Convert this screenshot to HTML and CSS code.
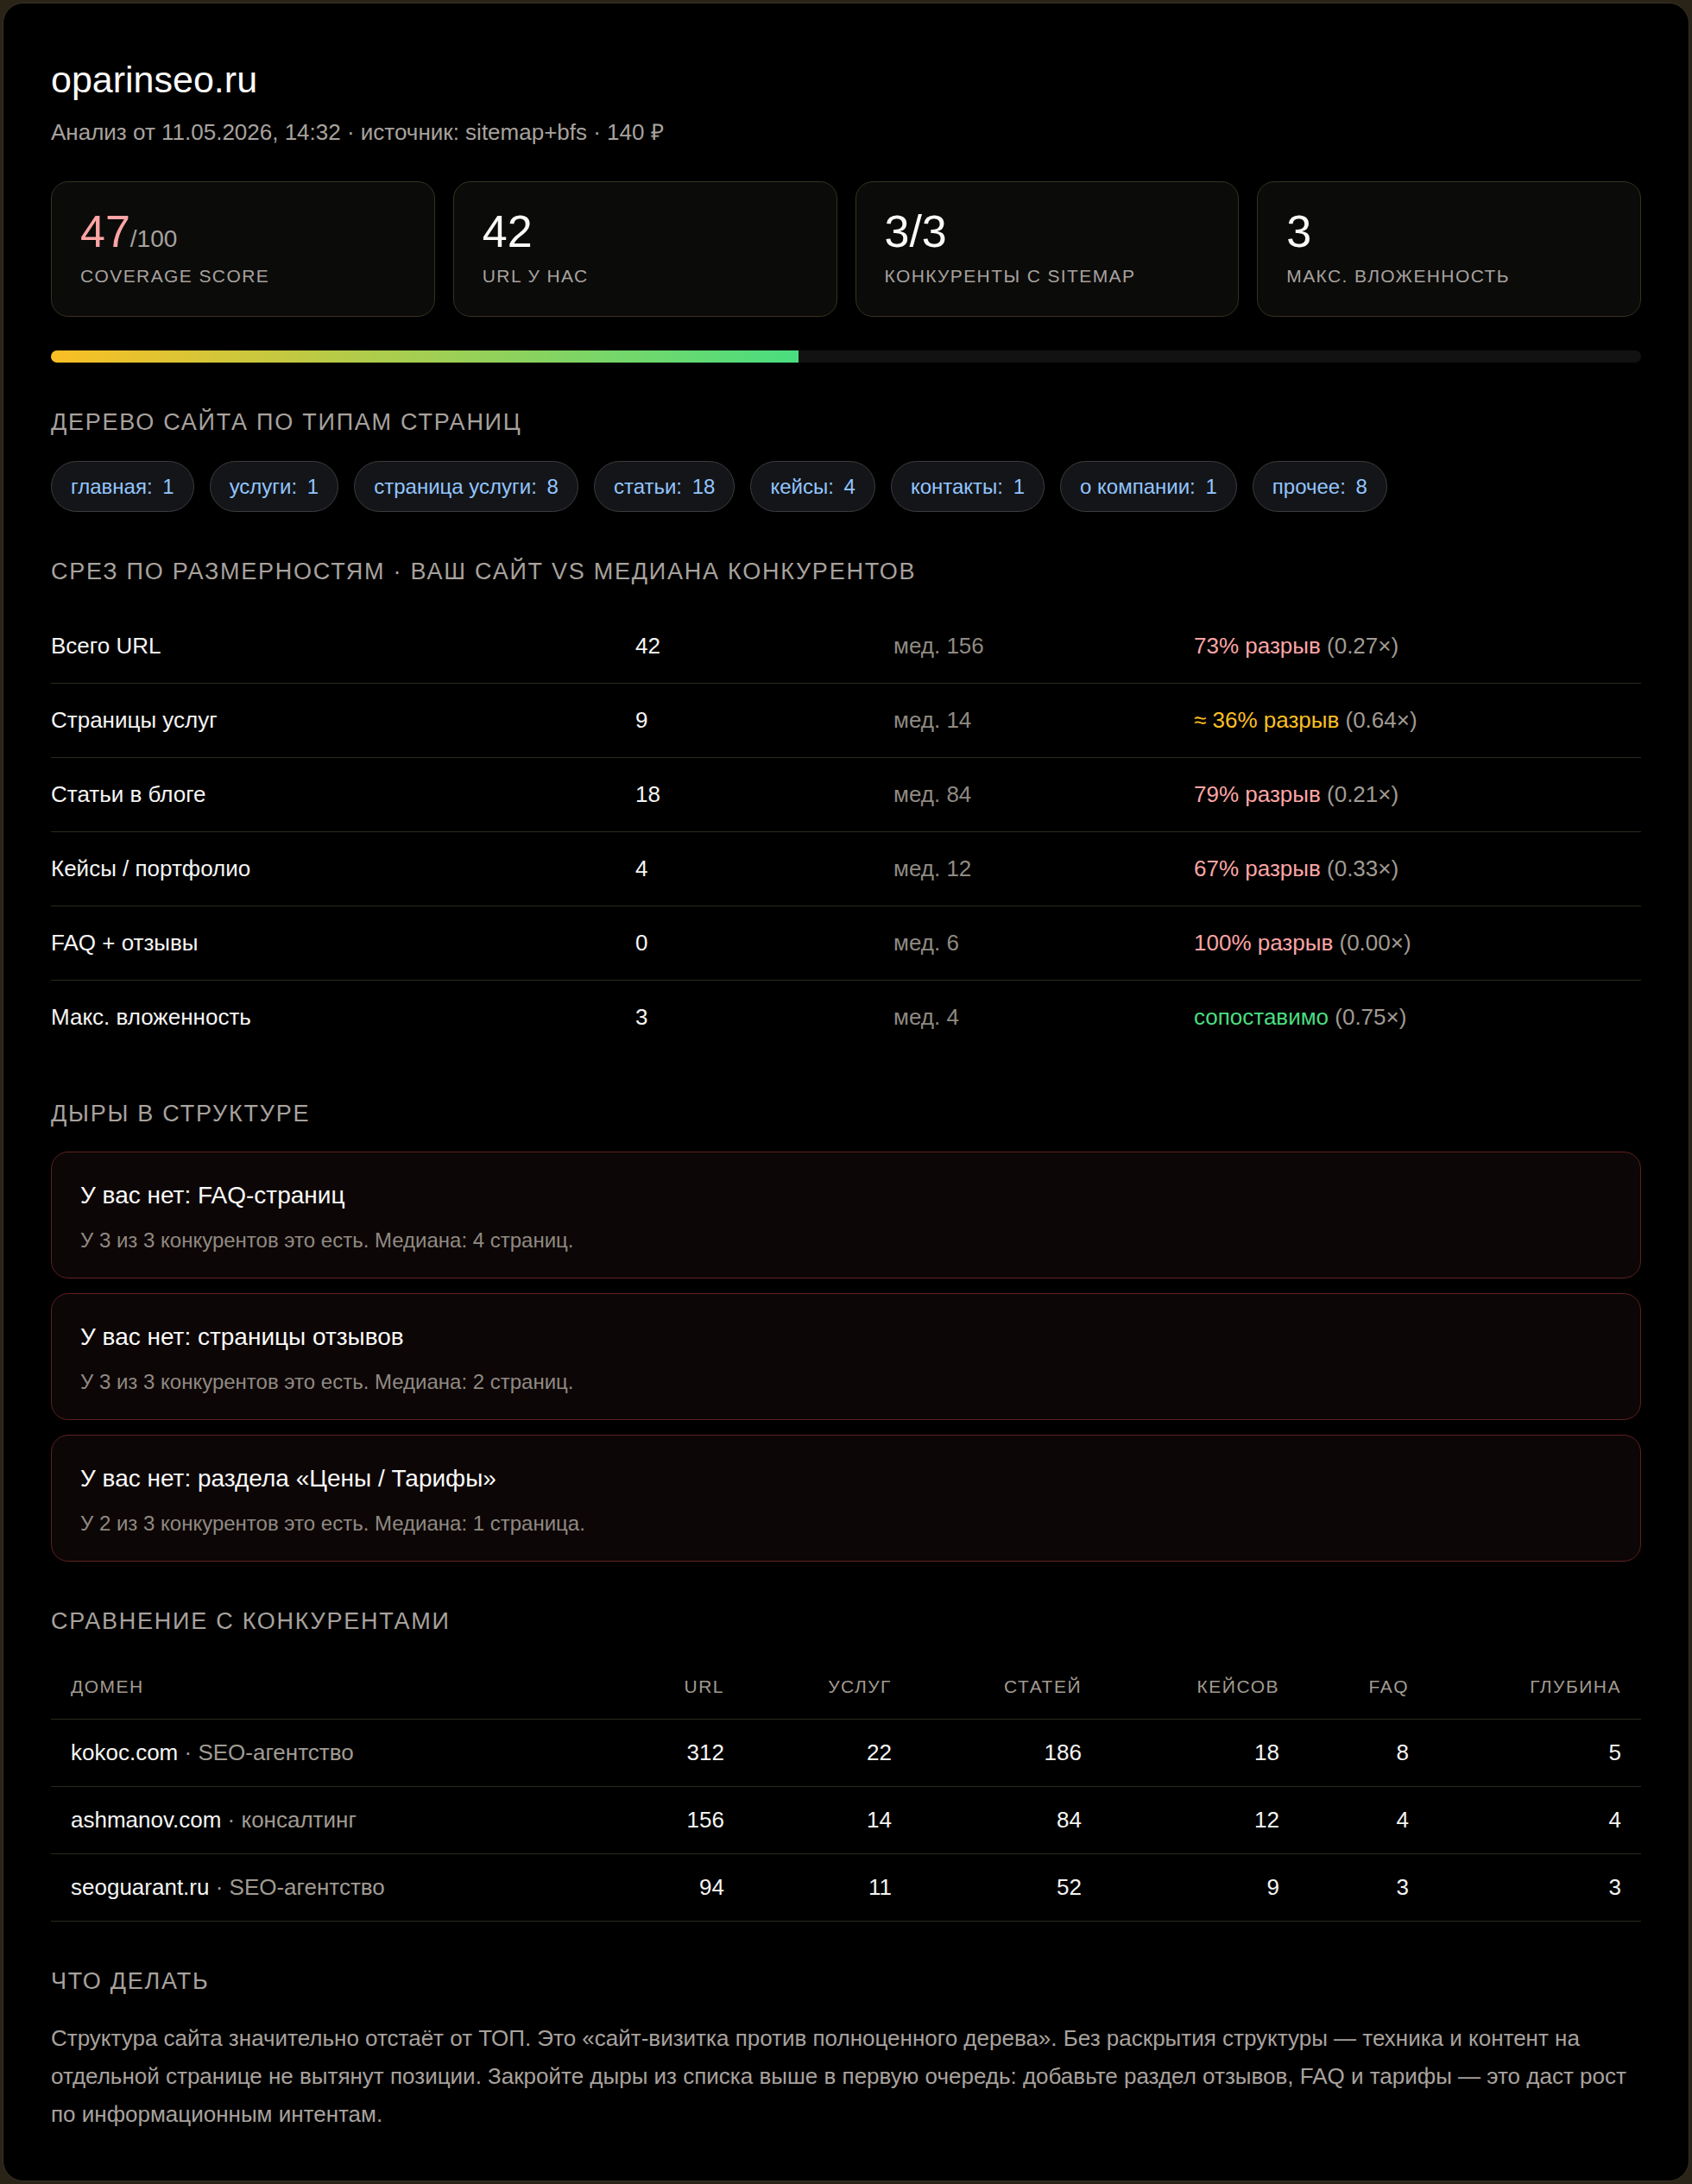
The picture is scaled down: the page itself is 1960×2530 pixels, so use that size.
FILE: index.html
```html
<!DOCTYPE html>
<html lang="ru">
<head>
    <meta charset="UTF-8">
    <meta name="viewport" content="width=device-width, initial-scale=1.0">
    <title>oparinseo.ru — структура сайта</title>
    <link rel="stylesheet" href="styles.css">
</head>
<body>
    <div class="report">
        <h1 class="site">oparinseo.ru</h1>
        <div class="meta">Анализ от 11.05.2026, 14:32 · источник: sitemap+bfs · 140 ₽</div>

        <div class="stats">
            <div class="stat">
                <div class="stat-value"><span class="score">47</span><span class="of">/100</span></div>
                <div class="stat-label">Coverage score</div>
            </div>
            <div class="stat">
                <div class="stat-value">42</div>
                <div class="stat-label">URL у нас</div>
            </div>
            <div class="stat">
                <div class="stat-value">3/3</div>
                <div class="stat-label">Конкуренты с sitemap</div>
            </div>
            <div class="stat">
                <div class="stat-value">3</div>
                <div class="stat-label">Макс. вложенность</div>
            </div>
        </div>

        <div class="bar"><div class="bar-fill" style="width: 47%"></div></div>

        <h2 class="section-title">Дерево сайта по типам страниц</h2>
        <div class="pills">
            <span class="pill">главная: <b>1</b></span>
            <span class="pill">услуги: <b>1</b></span>
            <span class="pill">страница услуги: <b>8</b></span>
            <span class="pill">статьи: <b>18</b></span>
            <span class="pill">кейсы: <b>4</b></span>
            <span class="pill">контакты: <b>1</b></span>
            <span class="pill">о компании: <b>1</b></span>
            <span class="pill">прочее: <b>8</b></span>
        </div>

        <h2 class="section-title">Срез по размерностям · ваш сайт vs медиана конкурентов</h2>
        <div class="dims">
            <div class="dim">
                <div class="dim-name">Всего URL</div>
                <div class="dim-our">42</div>
                <div class="dim-med">мед. 156</div>
                <div><span class="bad">73% разрыв</span> <span class="ratio">(0.27×)</span></div>
            </div>
            <div class="dim">
                <div class="dim-name">Страницы услуг</div>
                <div class="dim-our">9</div>
                <div class="dim-med">мед. 14</div>
                <div><span class="warn">≈ 36% разрыв</span> <span class="ratio">(0.64×)</span></div>
            </div>
            <div class="dim">
                <div class="dim-name">Статьи в блоге</div>
                <div class="dim-our">18</div>
                <div class="dim-med">мед. 84</div>
                <div><span class="bad">79% разрыв</span> <span class="ratio">(0.21×)</span></div>
            </div>
            <div class="dim">
                <div class="dim-name">Кейсы / портфолио</div>
                <div class="dim-our">4</div>
                <div class="dim-med">мед. 12</div>
                <div><span class="bad">67% разрыв</span> <span class="ratio">(0.33×)</span></div>
            </div>
            <div class="dim">
                <div class="dim-name">FAQ + отзывы</div>
                <div class="dim-our">0</div>
                <div class="dim-med">мед. 6</div>
                <div><span class="bad">100% разрыв</span> <span class="ratio">(0.00×)</span></div>
            </div>
            <div class="dim">
                <div class="dim-name">Макс. вложенность</div>
                <div class="dim-our">3</div>
                <div class="dim-med">мед. 4</div>
                <div><span class="ok">сопоставимо</span> <span class="ratio">(0.75×)</span></div>
            </div>
        </div>

        <h2 class="section-title">Дыры в структуре</h2>
        <div class="gaps">
            <div class="gap">
                <div class="gap-title">У вас нет: FAQ-страниц</div>
                <div class="gap-text">У 3 из 3 конкурентов это есть. Медиана: 4 страниц.</div>
            </div>
            <div class="gap">
                <div class="gap-title">У вас нет: страницы отзывов</div>
                <div class="gap-text">У 3 из 3 конкурентов это есть. Медиана: 2 страниц.</div>
            </div>
            <div class="gap">
                <div class="gap-title">У вас нет: раздела «Цены / Тарифы»</div>
                <div class="gap-text">У 2 из 3 конкурентов это есть. Медиана: 1 страница.</div>
            </div>
        </div>

        <h2 class="section-title">Сравнение с конкурентами</h2>
        <table class="rivals">
            <colgroup>
                <col class="c-domain">
                <col class="c-url">
                <col class="c-svc">
                <col class="c-art">
                <col class="c-case">
                <col class="c-faq">
                <col class="c-depth">
            </colgroup>
            <thead>
                <tr>
                    <th>Домен</th>
                    <th class="num">URL</th>
                    <th class="num">Услуг</th>
                    <th class="num">Статей</th>
                    <th class="num">Кейсов</th>
                    <th class="num">FAQ</th>
                    <th class="num">Глубина</th>
                </tr>
            </thead>
            <tbody>
                <tr>
                    <td>kokoc.com <span class="kind">· SEO-агентство</span></td>
                    <td class="num">312</td>
                    <td class="num">22</td>
                    <td class="num">186</td>
                    <td class="num">18</td>
                    <td class="num">8</td>
                    <td class="num">5</td>
                </tr>
                <tr>
                    <td>ashmanov.com <span class="kind">· консалтинг</span></td>
                    <td class="num">156</td>
                    <td class="num">14</td>
                    <td class="num">84</td>
                    <td class="num">12</td>
                    <td class="num">4</td>
                    <td class="num">4</td>
                </tr>
                <tr>
                    <td>seoguarant.ru <span class="kind">· SEO-агентство</span></td>
                    <td class="num">94</td>
                    <td class="num">11</td>
                    <td class="num">52</td>
                    <td class="num">9</td>
                    <td class="num">3</td>
                    <td class="num">3</td>
                </tr>
            </tbody>
        </table>

        <h2 class="section-title">Что делать</h2>
        <p class="advice">Структура сайта значительно отстаёт от ТОП. Это «сайт-визитка против полноценного дерева». Без раскрытия структуры — техника и контент на отдельной странице не вытянут позиции. Закройте дыры из списка выше в первую очередь: добавьте раздел отзывов, FAQ и тарифы — это даст рост по информационным интентам.</p>
    </div>
</body>
</html>
```

FILE: styles.css
```css
* {
    box-sizing: border-box;
}

body {
    margin: 0;
    background-color: #2a2418;
    font-family: "Liberation Sans", Arial, Helvetica, sans-serif;
    color: #f5f5f4;
}

/* Panel negro con borde redondeado */
.report {
    margin: 3px;
    min-height: calc(100vh - 6px);
    padding: 63px 55px 50px;
    background-color: #000;
    border: 1px solid #3a3122;
    border-radius: 24px;
}

.site {
    margin: 0;
    font-size: 43px;
    font-weight: normal;
    line-height: 1.2;
    color: #fafaf9;
}

.meta {
    margin-top: 17px;
    font-size: 26px;
    line-height: 35px;
    color: #a8a29e;
}

/* Tarjetas de métricas */
.stats {
    display: grid;
    grid-template-columns: repeat(4, 1fr);
    gap: 21px;
    margin-top: 39px;
}

.stat {
    padding: 26px 33px 34px;
    background-color: #0b0b0a;
    border: 1px solid #37321f;
    border-radius: 20px;
}

.stat-value {
    font-size: 52px;
    line-height: 1.2;
    color: #fafaf9;
}

.stat-value .score {
    color: #fca5a5;
}

.stat-value .of {
    font-size: 28px;
    color: #a8a29e;
}

.stat-label {
    margin-top: 8px;
    font-size: 21px;
    line-height: 1.2;
    letter-spacing: 1.4px;
    text-transform: uppercase;
    color: #a8a29e;
}

.bar {
    height: 14px;
    margin-top: 39px;
    background-color: #121212;
    border-radius: 7px;
    overflow: hidden;
}

.bar-fill {
    height: 100%;
    background: linear-gradient(90deg, #fbbf24, #4ade80);
}

.section-title {
    margin: 53px 0 28px;
    font-size: 27px;
    font-weight: normal;
    line-height: 1.2;
    letter-spacing: 1.75px;
    text-transform: uppercase;
    color: #a8a29e;
}

/* Chips del árbol */
.pills {
    display: flex;
    flex-wrap: wrap;
    gap: 18px;
}

.pill {
    padding: 14px 22px;
    font-size: 24px;
    line-height: 29px;
    color: #93c5fd;
    background-color: #131519;
    border: 1px solid #3d3d3d;
    border-radius: 30px;
}

.pill b {
    font-weight: normal;
    margin-left: 5px;
}

/* Tabla de dimensiones */
.dim {
    display: grid;
    grid-template-columns: 677px 299px 348px 1fr;
    padding: 25px 0;
    font-size: 26px;
    line-height: 35px;
    border-bottom: 1px solid #2b2a1d;
}

.dim:last-child {
    border-bottom: none;
}

.dim-name,
.dim-our {
    color: #f5f5f4;
}

.dim-med {
    color: #8f8a82;
}

.bad {
    color: #fca5a5;
}

.warn {
    color: #fbbf24;
}

.ok {
    color: #4ade80;
}

.ratio {
    color: #a09b92;
}

/* Huecos */
.gaps {
    display: flex;
    flex-direction: column;
    gap: 17px;
}

.gap {
    padding: 32px 33px 28px;
    background-color: #0d0606;
    border: 1.5px solid #5e2020;
    border-radius: 20px;
}

.gap-title {
    font-size: 28px;
    line-height: 36px;
    color: #fafaf9;
}

.gap-text {
    margin-top: 18px;
    font-size: 24px;
    line-height: 31px;
    color: #8f8a82;
}

/* Comparación */
.rivals {
    width: 100%;
    border-collapse: collapse;
    table-layout: fixed;
}

.c-domain { width: 643px; }
.c-url { width: 160px; }
.c-svc { width: 194px; }
.c-art { width: 220px; }
.c-case { width: 229px; }
.c-faq { width: 150px; }
.c-depth { width: 246px; }

.rivals th,
.rivals td {
    padding: 21px 23px;
    text-align: left;
    border-bottom: 1px solid #2b2a1d;
}

.rivals th {
    padding: 17px 23px 23px;
    font-size: 21px;
    font-weight: normal;
    line-height: 28px;
    letter-spacing: 1.5px;
    text-transform: uppercase;
    color: #a09b92;
}

.rivals td {
    font-size: 26px;
    line-height: 35px;
    color: #f5f5f4;
}

.rivals .num {
    text-align: right;
}

.kind {
    color: #a09b92;
}

.advice {
    margin: 0;
    font-size: 26px;
    line-height: 44px;
    color: #a8a29e;
}
```
